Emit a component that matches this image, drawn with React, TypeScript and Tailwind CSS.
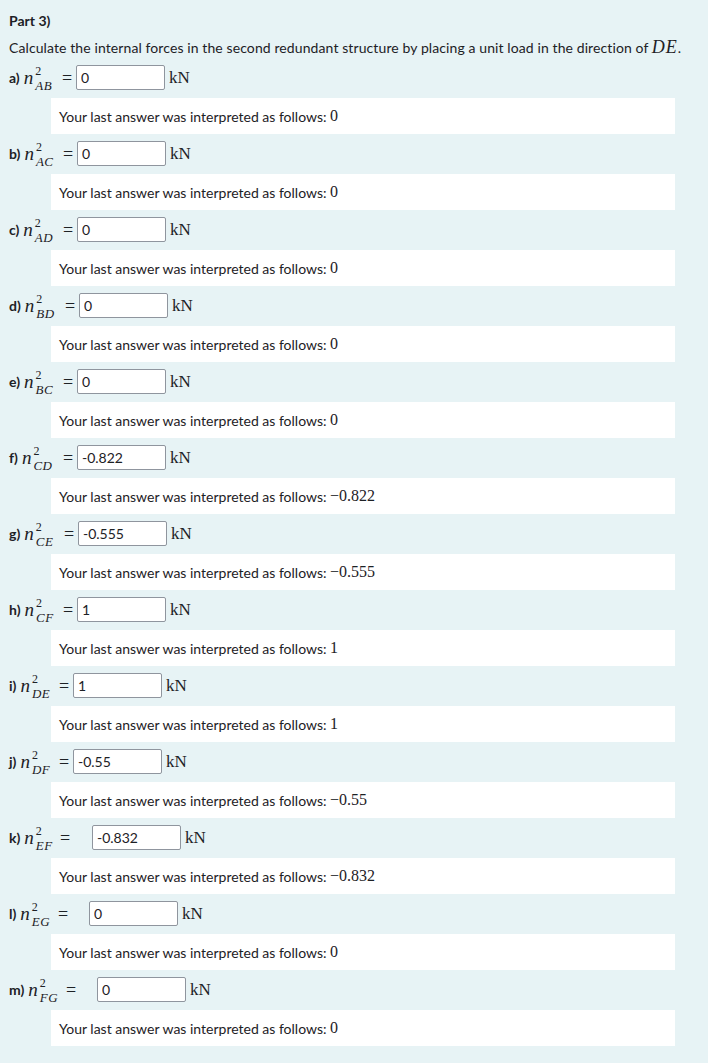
import React from 'react';

type Row = {
  label: string;
  sub: string;
  value: string;
  shown: string;
  prefix: string;
  gap: string;
};

const rows: Row[] = [
  { label: 'a)', sub: 'AB', value: '0', shown: '0', prefix: 'w-[52px]', gap: 'mr-[3px]' },
  { label: 'b)', sub: 'AC', value: '0', shown: '0', prefix: 'w-[53px]', gap: 'mr-[3px]' },
  { label: 'c)', sub: 'AD', value: '0', shown: '0', prefix: 'w-[53px]', gap: 'mr-[3px]' },
  { label: 'd)', sub: 'BD', value: '0', shown: '0', prefix: 'w-[55px]', gap: 'mr-[3px]' },
  { label: 'e)', sub: 'BC', value: '0', shown: '0', prefix: 'w-[53px]', gap: 'mr-[3px]' },
  { label: 'f)', sub: 'CD', value: '-0.822', shown: '\u22120.822', prefix: 'w-[53px]', gap: 'mr-[3px]' },
  { label: 'g)', sub: 'CE', value: '-0.555', shown: '\u22120.555', prefix: 'w-[54px]', gap: 'mr-[3px]' },
  { label: 'h)', sub: 'CF', value: '1', shown: '1', prefix: 'w-[53px]', gap: 'mr-[3px]' },
  { label: 'i)', sub: 'DE', value: '1', shown: '1', prefix: 'w-[49px]', gap: 'mr-[3px]' },
  { label: 'j)', sub: 'DF', value: '-0.55', shown: '\u22120.55', prefix: 'w-[49px]', gap: 'mr-[3px]' },
  { label: 'k)', sub: 'EF', value: '-0.832', shown: '\u22120.832', prefix: 'w-[50px]', gap: 'mr-[21px]' },
  { label: 'l)', sub: 'EG', value: '0', shown: '0', prefix: 'w-[48px]', gap: 'mr-[20px]' },
  { label: 'm)', sub: 'FG', value: '0', shown: '0', prefix: 'w-[56px]', gap: 'mr-[20px]' },
];

const sans = { fontFamily: 'Lato, "Open Sans", sans-serif' };
const serif = { fontFamily: '"Liberation Serif", "DejaVu Serif", serif' };

function Force({ sub }: { sub: string }) {
  // n with the superscript 2 stacked over the member subscript
  return (
    <span className="inline-flex items-center" style={serif}>
      <span className="italic text-[19px] leading-none">n</span>
      <span className="inline-flex flex-col ml-[2px] mt-[2px]">
        <span className="block text-[12px] leading-[14px]">2</span>
        <span className="block italic text-[13px] leading-[15px] tracking-[0.5px]">{sub}</span>
      </span>
    </span>
  );
}

function AnswerRow({ row }: { row: Row }) {
  return (
    <div>
      <div className="flex items-center h-[25px]">
        <span className={`${row.prefix} flex items-center gap-[4px] shrink-0`}>
          <span className="font-bold text-[14px]">{row.label}</span>
          <Force sub={row.sub} />
        </span>
        <span className={`w-[12px] text-center text-[18px] leading-none shrink-0 ${row.gap}`} style={serif}>
          =
        </span>
        <input
          readOnly
          value={row.value}
          className="w-[89px] h-[25px] border border-[#8f959e] rounded-[2px] bg-white px-[4px] text-[14px] text-[#1d2125] outline-none"
          style={sans}
        />
        <span className="ml-[4px] text-[17px] leading-none" style={serif}>
          kN
        </span>
      </div>
      <div className="ml-[42px] mt-[8px] h-[36px] bg-white flex items-center pl-[8px] text-[14px]">
        <span>Your last answer was interpreted as follows:&nbsp;</span>
        <span className="text-[16px]" style={serif}>
          {row.shown}
        </span>
      </div>
    </div>
  );
}

export default function App() {
  return (
    <div className="min-h-[1063px] bg-[#e7f3f5] text-[#1d2125] pl-[9px] pr-[33px] pt-[11px]" style={sans}>
      <div className="font-bold text-[14px] leading-[20px]">Part 3)</div>
      <p className="mt-[7px] h-[20px] text-[14px] tracking-[0.1px] leading-[20px] whitespace-nowrap">
        Calculate the internal forces in the second redundant structure by placing a unit load in the direction of{' '}
        <span className="italic text-[18px] leading-none tracking-[1px]" style={serif}>
          DE
        </span>
        .
      </p>
      <div className="mt-[7px] flex flex-col gap-[7px]">
        {rows.map((row) => (
          <AnswerRow key={row.label} row={row} />
        ))}
      </div>
    </div>
  );
}
